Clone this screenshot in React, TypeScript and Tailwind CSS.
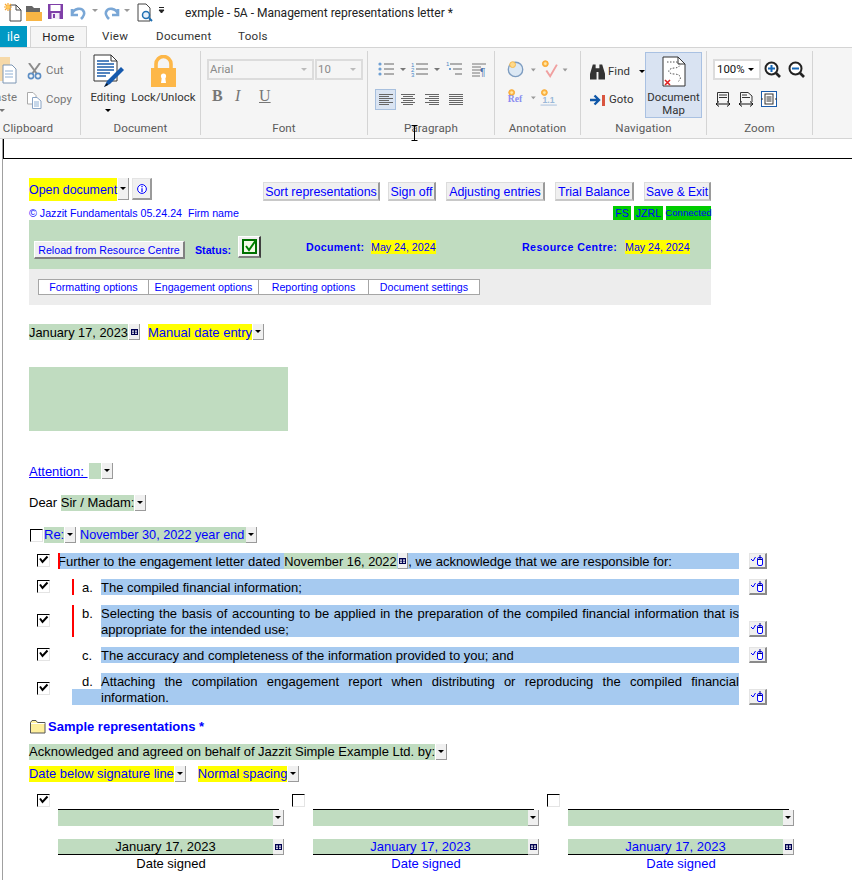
import React from "react";

const Tri = ({ c = "border-t-black" }: { c?: string }) => (
  <span className={`block w-0 h-0 border-l-[3px] border-r-[3px] border-t-[3px] border-l-transparent border-r-transparent ${c}`} />
);

const Drop = ({ cls = "h-[17px]" }: { cls?: string }) => (
  <span className={`inline-flex shrink-0 w-[11px] items-center justify-center bg-[#f0f0f0] border-r border-b border-[#9a9a9a] ${cls}`}>
    <Tri />
  </span>
);

const Cal = ({ cls = "h-[16px] w-[11px]" }: { cls?: string }) => (
  <span className={`inline-flex shrink-0 items-center justify-center bg-[#f0f0f0] border-r border-b border-[#9a9a9a] ${cls}`}>
    <svg width="7" height="6" viewBox="0 0 7 6">
      <rect x="0" y="0" width="7" height="6" fill="#000050" />
      <rect x="1" y="1.5" width="2" height="1.2" fill="#fff" />
      <rect x="4" y="1.5" width="2" height="1.2" fill="#fff" />
      <rect x="1" y="3.6" width="2" height="1.2" fill="#fff" />
      <rect x="4" y="3.6" width="2" height="1.2" fill="#fff" />
    </svg>
  </span>
);

const Btn = ({ children, cls = "" }: { children: React.ReactNode; cls?: string }) => (
  <span className={`inline-flex items-center justify-center h-[19px] pt-px bg-[#f0f0f0] border-t border-l border-[#dcdcdc] border-r-2 border-b-2 border-r-[#9a9a9a] border-b-[#c8c8c8] text-[#0000ff] text-[12.4px] whitespace-nowrap ${cls}`}>
    {children}
  </span>
);

const Check = ({ on = false, cls = "" }: { on?: boolean; cls?: string }) => (
  <span className={`inline-block shrink-0 w-[13px] h-[13px] bg-white border-t border-l border-black border-r border-b border-r-[#e4e4e4] border-b-[#e4e4e4] ${cls}`}>
    {on && (
      <svg width="11" height="11" viewBox="0 0 11 11" className="block">
        <path d="M2 3.5 L4.5 7 L9.5 1.5" fill="none" stroke="#000" strokeWidth="2" />
      </svg>
    )}
  </span>
);

const MouseBtn = ({ cls = "" }: { cls?: string }) => (
  <span className={`flex shrink-0 items-center justify-center w-[18px] h-[16px] bg-[#f0f0f0] border-t border-l border-[#e4e4e4] border-r-2 border-b-2 border-r-[#8a8a8a] border-b-[#8a8a8a] ${cls}`}>
    <svg width="13" height="11" viewBox="0 0 13 11">
      <path d="M0 4 L2 6 L4.5 2" fill="none" stroke="#0000ff" strokeWidth="1" />
      <rect x="6.5" y="2.5" width="5" height="8" rx="1.5" fill="#fff" stroke="#0000ff" />
      <path d="M9 0 V4 M7 4.5 H11" stroke="#000080" strokeWidth="1" />
    </svg>
  </span>
);

const Group = ({ w, label, children, labelCls = "" }: { w: string; label: string; children: React.ReactNode; labelCls?: string }) => (
  <div className={`${w} shrink-0 h-[84px] mt-[3px] border-r border-[#d4d4d4] flex flex-col overflow-hidden`}>
    <div className="h-[69px] relative flex">{children}</div>
    <div className={`h-[15px] pt-[2px] flex items-center justify-center text-[11.6px] text-[#5a5a5a] tracking-[0.1px] leading-none ${labelCls}`}>{label}</div>
  </div>
);

const Bars = ({ kind }: { kind: "l" | "c" | "r" | "j" }) => {
  const rows = [0, 1, 2, 3, 4, 5];
  const wid = [14, 10, 14, 10, 14, 10];
  return (
    <svg width="14" height="12" viewBox="0 0 14 12" className="block">
      {rows.map((i) => {
        const w = kind === "j" ? 14 : wid[i];
        const x = kind === "l" || kind === "j" ? 0 : kind === "c" ? (14 - w) / 2 : 14 - w;
        return <rect key={i} x={x} y={i * 2} width={w} height="1" fill="#666" />;
      })}
    </svg>
  );
};

const Sun = ({ x, y }: { x: number; y: number }) => (
  <g>
    <circle cx={x} cy={y} r="3" fill="#ffb84a" stroke="#f7a52e" />
    <circle cx={x} cy={y} r="1.4" fill="#ffe9a8" />
  </g>
);

const QuickBar = () => (
  <div className="h-[26px] flex items-center bg-white relative">
    <svg width="170" height="24" viewBox="0 0 170 24" className="ml-[2px] shrink-0">
      <path d="M8 4 H14 L19 9 V20 H8 Z" fill="#fff" stroke="#444" />
      <path d="M14 4 V9 H19" fill="none" stroke="#444" />
      <path d="M6 2 V10 M2 6 H10 M3 3 L9 9 M9 3 L3 9" stroke="#f7a52e" strokeWidth="1.2" />
      <circle cx="6" cy="6" r="2" fill="#ffc95c" />
      <path d="M24 5 H30 L32 7 H38 V11 H24 Z" fill="#666" />
      <path d="M24 11 H40 V20 H24 Z" fill="#f8b545" />
      <rect x="46" y="3" width="15" height="15" fill="#7f3fa8" />
      <rect x="48.5" y="4" width="10" height="6" fill="#fff" />
      <rect x="49.5" y="12" width="8" height="6" fill="#f2ecf7" />
      <rect x="51" y="13" width="2" height="4" fill="#7f3fa8" />
      <path d="M70 8 L70 14 L76 14 M70 13 C72 7 80 6 82 11 C83 14 81 16 79 18" fill="none" stroke="#7aa7d6" strokeWidth="2.6" />
      <path d="M90 8 H96 L93 11 Z" fill="#999" />
      <path d="M116 8 L116 14 L110 14 M116 13 C114 7 106 6 104 11 C103 14 105 16 107 18" fill="none" stroke="#7aa7d6" strokeWidth="2.6" />
      <path d="M122 8 H128 L125 11 Z" fill="#999" />
      <path d="M136 3 H144 L148 7 V20 H136 Z" fill="#fff" stroke="#444" />
      <circle cx="144" cy="14" r="3.5" fill="#e6f0fa" stroke="#1f6fb2" strokeWidth="1.5" />
      <path d="M147 17 L150 20" stroke="#1f6fb2" strokeWidth="2" />
      <path d="M157 6.5 H162 M157 9 H162 L159.5 12 Z" stroke="#222" fill="#222" strokeWidth="1" />
    </svg>
    <span className="ml-[13px] text-[12px] text-[#222] whitespace-nowrap">exmple - 5A - Management representations letter *</span>
  </div>
);

const Tabs = () => (
  <div className="h-[21px] flex items-end text-[11.6px] text-[#333] tracking-[0.3px]">
    <span className="w-[27px] h-[21px] bg-[#0099c4] text-white flex items-center justify-end pr-[7px] text-[12px]">ile</span>
    <span className="ml-[3px] w-[57px] h-[22px] -mb-px relative bg-[#f5f5f5] border-t border-l border-r border-[#d4d4d4] flex items-center justify-center text-[#222]">Home</span>
    <span className="ml-[15px] w-[27px] h-[21px] pt-px flex items-center">View</span>
    <span className="ml-[27px] w-[54px] h-[21px] pt-px flex items-center">Document</span>
    <span className="ml-[28px] h-[21px] pt-px flex items-center">Tools</span>
  </div>
);

const Ribbon = () => (
  <div className="h-[92px] bg-[#f5f5f5] border-t border-b border-[#d4d4d4] flex relative text-[11.4px] tracking-[0.05px] text-[#444] leading-none">
    <Group w="w-[81px]" label="Clipboard" labelCls="pr-[24px]">
      <div className="w-[18px] shrink-0 relative overflow-hidden flex flex-col items-end">
        <svg width="18" height="34" viewBox="0 0 18 34" className="mt-[2px] shrink-0">
          <rect x="-8" y="4" width="18" height="24" fill="#f6d9a8" />
          <path d="M3 12 H12 L16 16 V30 H3 Z" fill="#fff" stroke="#7c96b4" />
          <path d="M5 18 H13 M5 21 H13 M5 24 H13" stroke="#8fb0d4" />
        </svg>
        <span className="mt-[5px] text-[#777] pr-[1px] leading-none">aste</span>
        <span className="mt-[6px] mr-[13px]"><Tri c="border-t-[#777]" /></span>
      </div>
      <div className="ml-[9px] flex flex-col text-[#777]">
        <div className="mt-[11px] flex items-center gap-[4px] h-[18px]">
          <svg width="15" height="17" viewBox="0 0 15 17">
            <path d="M2 0 L10 11 M13 0 L5 11" stroke="#8c8c8c" strokeWidth="2" />
            <circle cx="4" cy="13" r="2.6" fill="none" stroke="#5d8ec4" strokeWidth="1.6" />
            <circle cx="11" cy="13" r="2.6" fill="none" stroke="#5d8ec4" strokeWidth="1.6" />
          </svg>
          <span>Cut</span>
        </div>
        <div className="mt-[11px] flex items-center gap-[4px] h-[18px]">
          <svg width="15" height="17" viewBox="0 0 15 17">
            <path d="M0.5 0.5 H6 L9 3.5 V12 H0.5 Z" fill="#fff" stroke="#aaa" />
            <path d="M5.5 5.5 H10 L14 9 V16.5 H5.5 Z" fill="#fff" stroke="#8aa4c4" />
            <path d="M7 10 H12 M7 12 H12 M7 14 H12" stroke="#8fb0d4" />
          </svg>
          <span>Copy</span>
        </div>
      </div>
    </Group>

    <Group w="w-[120px]" label="Document">
      <div className="ml-[8px] w-[38px] flex flex-col items-center">
        <svg width="33" height="35" viewBox="0 0 33 35" className="mt-[3px] ml-[3px] shrink-0">
          <path d="M1 1 H18 L24 7 V27 H1 Z" fill="#fff" stroke="#333" />
          <path d="M18 1 V7 H24" fill="none" stroke="#333" />
          <path d="M4 7 H16 M4 10 H21 M4 13 H21 M4 16 H21 M4 19 H17 M4 22 H13" stroke="#1b5cab" strokeWidth="1.4" />
          <path d="M11 33 L14 27 L28 13 L31 16 L17 30 Z" fill="#1559ad" />
          <path d="M11 33 L14 29 L15 31 Z" fill="#111" />
        </svg>
        <span className="mt-[3px] text-[#333] whitespace-nowrap">Editing</span>
        <span className="mt-[6px]"><Tri /></span>
      </div>
      <div className="ml-[4px] w-[65px] flex flex-col items-center">
        <svg width="27" height="33" viewBox="0 0 27 33" className="mt-[4px] shrink-0">
          <path d="M6 14 V9 A7.5 7.5 0 0 1 21 9 V14" fill="none" stroke="#fdb748" strokeWidth="3.6" />
          <rect x="1" y="13" width="25" height="19" fill="#fdb748" />
          <circle cx="13.5" cy="21" r="2.6" fill="#fff" />
          <path d="M12 21 H15 L16 28 H11 Z" fill="#fff" />
        </svg>
        <span className="mt-[4px] text-[#333] whitespace-nowrap">Lock/Unlock</span>
      </div>
    </Group>

    <Group w="w-[167px]" label="Font">
      <div className="pl-[6px] flex flex-col">
        <div className="mt-[8px] flex gap-[1px]">
          <span className="w-[107px] h-[21px] border-2 border-[#dcdcdc] bg-[#f5f5f5] text-[#8a8a8a] flex items-center justify-between pl-[1px] pr-[5px]">Arial<Tri c="border-t-[#bbb]" /></span>
          <span className="w-[48px] h-[21px] border-2 border-[#dcdcdc] bg-[#f5f5f5] text-[#8a8a8a] flex items-center justify-between pl-[1px] pr-[5px]">10<Tri c="border-t-[#bbb]" /></span>
        </div>
        <div className="mt-[8px] flex items-center font-['Liberation_Serif',serif] text-[#777] text-[16px]">
          <span className="ml-[5px] w-[23px] font-bold">B</span>
          <span className="w-[24px] italic">I</span>
          <span className="underline">U</span>
        </div>
      </div>
    </Group>

    <Group w="w-[127px]" label="Paragraph">
      <div className="flex flex-col w-full">
        <div className="mt-[10px] h-[17px] relative flex items-center">
          <svg width="110" height="17" viewBox="0 0 110 17" className="ml-[10px]">
            <g fill="#6fa0d4"><circle cx="2" cy="3" r="1.6" /><circle cx="2" cy="8" r="1.6" /><circle cx="2" cy="13" r="1.6" /></g>
            <path d="M6 3 H16 M6 8 H16 M6 13 H16" stroke="#666" />
            <path d="M22 7 H28 L25 10 Z" fill="#777" />
            <text x="33" y="6" fontSize="6" fill="#4a88c8" fontFamily="Liberation Sans">1</text>
            <text x="33" y="11" fontSize="6" fill="#4a88c8" fontFamily="Liberation Sans">2</text>
            <text x="33" y="16" fontSize="6" fill="#4a88c8" fontFamily="Liberation Sans">3</text>
            <path d="M38 3 H50 M38 8 H50 M38 13 H50" stroke="#666" />
            <path d="M56 7 H62 L59 10 Z" fill="#777" />
            <text x="68" y="5" fontSize="6" fill="#4a88c8" fontFamily="Liberation Sans">1</text>
            <path d="M72 3 H84 M75 8 H84 M77 13 H84" stroke="#666" />
            <rect x="71" y="7" width="2" height="2" fill="#6fa0d4" />
            <path d="M94 3 H108 M94 6 H103 M94 9 H103 M94 12 H102 M94 15 H102" stroke="#777" />
            <text x="102" y="15" fontSize="10" fill="#4a6fa8" fontFamily="Liberation Sans">¶</text>
          </svg>
        </div>
        <div className="mt-[11px] flex items-center">
          <span className="ml-[7px] w-[21px] h-[21px] bg-[#dae4f2] border border-[#a8c0de] flex items-center justify-center"><Bars kind="l" /></span>
          <span className="ml-[5px]"><Bars kind="c" /></span>
          <span className="ml-[10px]"><Bars kind="r" /></span>
          <span className="ml-[10px]"><Bars kind="j" /></span>
        </div>
      </div>
    </Group>

    <Group w="w-[86px]" label="Annotation">
      <svg width="80" height="60" viewBox="0 0 80 60" className="ml-[8px]">
        <circle cx="13" cy="18" r="7.5" fill="#dce8f4" stroke="#7d9cc0" strokeWidth="1.4" />
        <circle cx="10" cy="13" r="3" fill="#ffd98a" stroke="#f2b84e" />
        <path d="M29 17 H34 L31.5 20 Z" fill="#999" />
        <Sun x={44} y={12} />
        <path d="M45 19 L49 25 L56 13" fill="none" stroke="#f0a0a0" strokeWidth="2" />
        <path d="M62 17 H67 L64.5 20 Z" fill="#999" />
        <Sun x={9} y={42} />
        <text x="5" y="52" fontSize="10" fontWeight="700" fill="#8a8cf0" fontFamily="Liberation Serif">Ref</text>
        <path d="M29 46 H34 L31.5 49 Z" fill="#999" />
        <Sun x={43} y={42} />
        <text x="41" y="53" fontSize="9" fontWeight="700" fill="#9ab8d8" fontFamily="Liberation Sans">1.1</text>
        <path d="M39 55 H56" stroke="#a8c0de" />
      </svg>
    </Group>

    <Group w="w-[126px]" label="Navigation">
      <div className="ml-[9px] w-[55px] flex flex-col text-[#333]">
        <div className="mt-[12px] h-[17px] flex items-center gap-[3px]">
          <svg width="16" height="16" viewBox="0 0 16 16">
            <path d="M3 0 H6 V4 H10 V0 H13 L16 10 V16 H9 V8 H7 V16 H0 V10 Z" fill="#333" />
          </svg>
          <span>Find</span>
          <span className="ml-[6px]"><Tri /></span>
        </div>
        <div className="mt-[11px] h-[17px] flex items-center gap-[3px]">
          <svg width="16" height="12" viewBox="0 0 16 12">
            <path d="M0 6 H8 M4.5 1.5 L9 6 L4.5 10.5" fill="none" stroke="#0f57a8" strokeWidth="2.4" />
            <rect x="12" y="1" width="3" height="11" fill="#d9553f" />
          </svg>
          <span>Goto</span>
        </div>
      </div>
      <div className="absolute left-[64px] top-[1px] w-[57px] h-[66px] bg-[#d9e3f2] border border-[#a9c1e2] flex flex-col items-center text-[#333]">
        <svg width="24" height="31" viewBox="0 0 24 31" className="mt-[3px] shrink-0">
          <path d="M1 1 H16 L23 8 V30 H1 Z" fill="#fff" stroke="#333" />
          <path d="M16 1 V8 H23" fill="none" stroke="#333" />
          <path d="M5 6 H15 C20 8 18 12 12 12 C4 13 6 18 12 18 C20 18 20 24 15 26" fill="none" stroke="#555" strokeDasharray="1.5 1.5" />
          <path d="M3 24 L8 29 M8 24 L3 29" stroke="#e02020" strokeWidth="1.6" />
        </svg>
        <span className="mt-[4px] leading-[13px] text-center">Document<br />Map</span>
      </div>
    </Group>

    <Group w="w-[106px]" label="Zoom">
      <div className="pl-[6px] flex flex-col">
        <div className="mt-[8px] flex items-center">
          <span className="w-[48px] h-[21px] bg-white border-2 border-[#dcdcdc] text-[#111] flex items-center justify-between pl-[2px] pr-[5px] tracking-normal">100%<Tri /></span>
          <svg width="42" height="18" viewBox="0 0 42 18" className="ml-[3px]">
            <circle cx="7.5" cy="7.5" r="6" fill="#fff" stroke="#222" strokeWidth="2" />
            <path d="M12 12 L16 16" stroke="#222" strokeWidth="2.6" />
            <path d="M4 7.5 H11 M7.5 4 V11" stroke="#1668b8" strokeWidth="2" />
            <circle cx="31.5" cy="7.5" r="6" fill="#fff" stroke="#222" strokeWidth="2" />
            <path d="M36 12 L40 16" stroke="#222" strokeWidth="2.6" />
            <path d="M28 7.5 H35" stroke="#1668b8" strokeWidth="2" />
          </svg>
        </div>
        <div className="mt-[11px] flex items-center">
          <svg width="70" height="16" viewBox="0 0 70 16" className="ml-[3px]">
            <path d="M1.5 1.5 H12.5 V11 M1.5 1.5 V11 M3 4 H11 M3 6.5 H11" fill="none" stroke="#333" />
            <path d="M0 13 H14 M0 13 L3 10.5 M0 13 L3 15.5 M14 13 L11 10.5 M14 13 L11 15.5" stroke="#111" fill="none" />
            <path d="M24.5 1.5 H32 L36 5 V11 M24.5 1.5 V11 M26 4 H31 M26 6.5 H34" fill="none" stroke="#333" />
            <path d="M23 13 H37 M23 13 L26 10.5 M23 13 L26 15.5 M37 13 L34 10.5 M37 13 L34 15.5" stroke="#111" fill="none" />
            <rect x="45.5" y="0.5" width="15" height="15" fill="#fff" stroke="#1b5cab" />
            <rect x="49" y="3" width="8" height="10" fill="#fff" stroke="#333" />
            <path d="M50.5 6 H55.5 M50.5 8 H55.5 M50.5 10 H55.5 M47 8 H45 M59 8 H61" stroke="#333" />
          </svg>
        </div>
      </div>
    </Group>

    <svg width="7" height="16" viewBox="0 0 7 16" className="absolute left-[411px] top-[77px]">
      <path d="M0.5 0.5 H6.5 M3.5 0.5 V15.5 M0.5 15.5 H6.5" stroke="#000" fill="none" />
    </svg>
  </div>
);

const HeaderTop = () => (
  <div className="mt-[19px] w-[682px] h-[24px] flex items-start">
    <span className="h-[23px] w-[88px] bg-[#ffff00] text-[#0000ff] text-[12.4px] flex items-center whitespace-nowrap">Open document</span>
    <span className="ml-[1px] h-[22px] w-[11px] flex items-center justify-center bg-[#f0f0f0] border-r border-b border-[#9a9a9a]"><Tri /></span>
    <span className="ml-[3px] h-[22px] w-[20px] flex items-center justify-center bg-[#f0f0f0] border-t border-l border-[#e4e4e4] border-r-2 border-b-2 border-r-[#9a9a9a] border-b-[#9a9a9a]">
      <svg width="10" height="10" viewBox="0 0 10 10">
        <circle cx="5" cy="5" r="4.4" fill="#fff" stroke="#0000ff" />
        <path d="M5 2 V3.2 M5 4.2 V8" stroke="#0000ff" strokeWidth="1.2" />
      </svg>
    </span>
    <div className="ml-[111px] mt-[4px] flex">
      <Btn cls="w-[117px]">Sort representations</Btn>
      <Btn cls="ml-[8px] w-[48px]">Sign off</Btn>
      <Btn cls="ml-[10px] w-[99px]">Adjusting entries</Btn>
      <Btn cls="ml-[10px] w-[79px]">Trial Balance</Btn>
      <Btn cls="ml-[10px] w-[67px]"><span className="text-[12px]">Save &amp; Exit</span></Btn>
    </div>
  </div>
);

const HeaderNote = () => (
  <div className="mt-[4px] w-[682px] h-[14px] flex items-center text-[10.67px] text-[#0000ff] whitespace-pre">
    <span>© Jazzit Fundamentals 05.24.24  Firm name</span>
    <div className="ml-auto flex gap-[3px] h-[14px] items-stretch leading-none">
      <span className="w-[18px] bg-[#00cc00] flex items-center justify-center">FS</span>
      <span className="w-[29px] bg-[#00cc00] flex items-center justify-center">JZRL</span>
      <span className="w-[45px] bg-[#00cc00] flex items-center justify-center text-[9.6px]">Connected</span>
    </div>
  </div>
);

const StatusPanel = () => (
  <div className="w-[682px] h-[49px] bg-[#c0dcc0] flex items-center text-[#0000ff] text-[10.67px] whitespace-nowrap">
    <span className="ml-[5px] mt-[11px] h-[18px] w-[151px] flex items-center justify-center bg-[#f0f0f0] border-t border-l border-white border-r-2 border-b-2 border-r-[#808080] border-b-[#808080] text-[10.67px]">Reload from Resource Centre</span>
    <span className="ml-[10px] mt-[11px] w-[37px] font-bold">Status:</span>
    <span className="ml-[6px] mt-[4px] w-[23px] h-[22px] flex items-center justify-center bg-[#f0f0f0] border-t border-l border-white border-r-2 border-b-2 border-r-[#404040] border-b-[#808080]">
      <svg width="15" height="15" viewBox="0 0 15 15">
        <rect x="1" y="1" width="13" height="13" fill="#f4fbe8" stroke="#007000" strokeWidth="2" />
        <path d="M4 7 L7 11 L14 1" fill="none" stroke="#008000" strokeWidth="2" />
      </svg>
    </span>
    <span className="ml-[45px] mt-[5px] w-[60px] font-bold tracking-[0.3px]">Document:</span>
    <span className="ml-[5px] mt-[5px] w-[65px] h-[14px] flex items-center bg-[#ffff00]">May 24, 2024</span>
    <span className="ml-[86px] mt-[5px] w-[97px] font-bold tracking-[0.4px]">Resource Centre:</span>
    <span className="ml-[6px] mt-[5px] w-[65px] h-[14px] flex items-center bg-[#ffff00]">May 24, 2024</span>
  </div>
);

const OptionTabs = () => (
  <div className="w-[682px] h-[36px] bg-[#ededed] pl-[9px] pt-[10px]">
    <div className="flex w-[442px] h-[16px] bg-white border border-[#a6a6a6] text-[#0000ff] text-[10.67px] whitespace-nowrap">
      <span className="w-[110px] flex items-center justify-center border-r border-[#a6a6a6]">Formatting options</span>
      <span className="w-[110px] flex items-center justify-center border-r border-[#a6a6a6]">Engagement options</span>
      <span className="w-[110px] flex items-center justify-center border-r border-[#a6a6a6]">Reporting options</span>
      <span className="flex-1 flex items-center justify-center">Document settings</span>
    </div>
  </div>
);

const Row = ({ letter, top, children, noBar }: { letter: string; top: string; children: React.ReactNode; noBar?: boolean }) => (
  <div className={`${top} flex items-start`}>
    <Check on cls="mt-px" />
    <div className="ml-[8px] w-[681px] flex">
      <span className={`ml-[14px] w-[2px] h-[16px] ${noBar ? "" : "bg-[#ff0000]"}`} />
      <span className="ml-[8px] w-[19px] h-[16px] pt-px leading-[16px]">{letter}</span>
      <div className="flex-1">{children}</div>
    </div>
    <MouseBtn cls="ml-[10px]" />
  </div>
);

const Items = () => (
  <div className="ml-[8px] flex flex-col w-[731px]">
    <div className="mt-[10px] flex items-start">
      <Check on cls="mt-px" />
      <div className="ml-[8px] w-[681px] h-[16px] bg-[#a6caf0] flex items-center whitespace-pre relative">
        <span className="w-[2px] h-[16px] bg-[#ff0000] absolute left-0 top-0" />
        <span className="pt-px">Further to the engagement letter dated </span>
        <span className="bg-[#c0dcc0] h-[16px] w-[113px] pt-[2px] flex items-center text-[12.8px]">November 16, 2022</span>
        <Cal cls="ml-[1px] h-[16px] w-[10px]" />
        <span className="pt-px">, we acknowledge that we are responsible for:</span>
      </div>
      <MouseBtn cls="ml-[10px]" />
    </div>

    <Row letter="a." top="mt-[10px]"><div className="h-[16px] pt-[2px] bg-[#a6caf0] flex items-center">The compiled financial information;</div></Row>

    <div className="mt-[10px] flex items-start">
      <Check on cls="mt-[9px]" />
      <div className="ml-[8px] w-[681px] flex">
        <span className="ml-[14px] w-[2px] h-[32px] bg-[#ff0000]" />
        <span className="ml-[8px] w-[19px] h-[16px] pt-px leading-[16px]">b.</span>
        <div className="flex-1 h-[32px] pt-px bg-[#a6caf0] leading-[16px] text-justify">Selecting the basis of accounting to be applied in the preparation of the compiled financial information that is appropriate for the intended use;</div>
      </div>
      <MouseBtn cls="ml-[10px] mt-[16px]" />
    </div>

    <Row letter="c." noBar top="mt-[10px]"><div className="h-[16px] pt-[2px] bg-[#a6caf0] flex items-center">The accuracy and completeness of the information provided to you; and</div></Row>

    <div className="mt-[10px] flex items-start">
      <Check on cls="mt-[9px]" />
      <div className="ml-[8px] w-[681px] pl-[14px]">
        <div className="flex h-[16px]">
          <span className="ml-[10px] w-[19px] h-[16px] pt-px leading-[16px]">d.</span>
          <div className="flex-1 h-[16px] pt-px bg-[#a6caf0] leading-[16px] whitespace-nowrap flex justify-between">
            {"Attaching the compilation engagement report when distributing or reproducing the compiled financial".split(" ").map((w, i) => (
              <span key={i}>{w}</span>
            ))}
          </div>
        </div>
        <div className="h-[16px] pt-px bg-[#a6caf0] pl-[29px] leading-[16px]">information.</div>
      </div>
      <MouseBtn cls="ml-[10px] mt-[16px]" />
    </div>
  </div>
);

const SigTop = ({ on, cls }: { on: boolean; cls: string }) => (
  <div className={`w-[247px] shrink-0 flex ${cls}`}>
    <Check on={on} cls="shrink-0" />
    <div className="ml-[8px] w-[226px]">
      <div className="mt-[15px] h-[1px] w-[221px] bg-black" />
      <div className="flex">
        <span className="w-[215px] h-[16px] bg-[#c0dcc0]" />
        <Drop cls="h-[16px]" />
      </div>
      <div className="mt-[13px] flex">
        <span className={`w-[215px] h-[16px] pt-px bg-[#c0dcc0] border-b border-black flex items-center justify-center ${on ? "text-black" : "text-[#0000ff]"}`}>January 17, 2023</span>
        <Cal />
      </div>
      <div className={`w-[226px] mt-[1px] text-center leading-[16px] ${on ? "text-black" : "text-[#0000ff]"}`}>Date signed</div>
    </div>
  </div>
);

export default function App() {
  return (
    <div className="w-[852px] h-[880px] overflow-hidden bg-white font-['Roboto',sans-serif]">
      <QuickBar />
      <Tabs />
      <Ribbon />
      <div className="ml-[2px] h-[741px] border-l border-[#a0a0a0] font-['Liberation_Sans',Arial,sans-serif] text-[13px] leading-[16px] text-black">
        <div className="h-[20px] border-l border-b border-black" />
        <div className="pl-[26px]">
          <HeaderTop />
          <HeaderNote />
          <StatusPanel />
          <OptionTabs />

          <div className="mt-[19px] h-[16px] flex whitespace-nowrap">
            <span className="bg-[#c0dcc0] w-[99px] pt-[2px] text-[12.8px] flex items-center">January 17, 2023</span>
            <Cal cls="ml-[1px] h-[16px] w-[11px]" />
            <span className="ml-[8px] bg-[#ffff00] text-[#0000ff] w-[104px] pt-[2px] flex items-center">Manual date entry</span>
            <Drop cls="ml-[1px] h-[16px]" />
          </div>

          <div className="mt-[27px] w-[259px] h-[64px] bg-[#c0dcc0]" />

          <div className="mt-[32px] h-[17px] flex whitespace-pre">
            <span className="w-[60px] pt-px text-[#0000ff] underline">Attention: </span>
            <span className="w-[12px] h-[16px] bg-[#c0dcc0]" />
            <Drop cls="ml-[1px] h-[16px]" />
          </div>

          <div className="mt-[15px] h-[16px] flex whitespace-pre">
            <span>Dear </span>
            <span className="bg-[#c0dcc0]">Sir / Madam:</span>
            <Drop cls="ml-[1px] h-[16px]" />
          </div>

          <div className="mt-[16px] h-[16px] flex whitespace-pre items-start">
            <Check cls="ml-[1px] mt-[2px]" />
            <span className="ml-[1px] w-[20px] bg-[#c0dcc0] text-[#0000ff]">Re:</span>
            <Drop cls="ml-[1px] h-[16px]" />
            <span className="ml-[4px] bg-[#c0dcc0] text-[#0000ff] text-[12.7px] w-[166px]">November 30, 2022 year end</span>
            <Drop cls="h-[16px]" />
          </div>

          <Items />

          <div className="mt-[14px] h-[16px] flex items-center whitespace-pre">
            <svg width="16" height="14" viewBox="0 0 16 14" className="ml-[1px] shrink-0">
              <path d="M0.5 2.5 L2 0.5 H6 L7.5 2.5 H15 V13 H0.5 Z" fill="#ffef9c" stroke="#555" />
              <path d="M1 3.5 H14.5" stroke="#fff" />
            </svg>
            <span className="ml-[2px] font-bold text-[#0000ff]">Sample representations</span>
            <span className="text-[#0000ff] font-bold"> *</span>
          </div>

          <div className="mt-[9px] h-[16px] flex whitespace-pre">
            <span className="bg-[#c0dcc0]">Acknowledged and agreed on behalf of Jazzit Simple Example Ltd. by:</span>
            <Drop cls="ml-[1px] h-[16px]" />
          </div>

          <div className="mt-[6px] h-[16px] flex whitespace-pre text-[12.9px]">
            <span className="bg-[#ffff00] text-[#0000ff]">Date below signature line</span>
            <Drop cls="ml-[1px] h-[16px]" />
            <span className="ml-[12px] bg-[#ffff00] text-[#0000ff]">Normal spacing</span>
            <Drop cls="ml-[1px] h-[16px]" />
          </div>

          <div className="mt-[12px] ml-[8px] flex">
            <SigTop on cls="" />
            <SigTop on={false} cls="ml-[8px]" />
            <SigTop on={false} cls="ml-[8px]" />
          </div>
        </div>
      </div>
    </div>
  );
}
